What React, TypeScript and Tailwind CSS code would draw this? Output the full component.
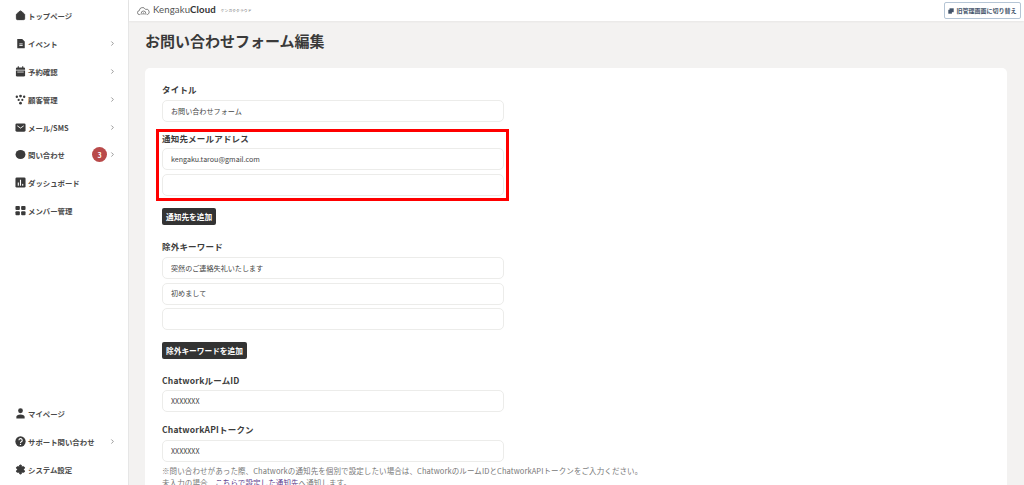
import React from 'react';
import { ChevronRight, House, Settings } from 'lucide-react';

const FONT = "font-['Noto_Sans_CJK_JP','Noto_Sans',sans-serif]";

const FileIcon = () => (
  <svg viewBox="0 0 12 12" className="w-[10px] h-[11px]" fill="#3a3a3a">
    <path d="M1.5 0.5h5.9L10.5 3.5V11a.6.6 0 0 1-.6.6H2.1a.6.6 0 0 1-.6-.6z" />
    <rect x="4" y="6" width="4" height="1" fill="#fff" />
    <rect x="4" y="8" width="4" height="1" fill="#fff" />
  </svg>
);

const CalIcon = () => (
  <svg viewBox="0 0 12 12" className="w-[11px] h-[11px]" fill="#3a3a3a">
    <rect x="3" y="0.3" width="1.2" height="2" />
    <rect x="7.8" y="0.3" width="1.2" height="2" />
    <path d="M1 3a1.4 1.4 0 0 1 1.4-1.4h7.2A1.4 1.4 0 0 1 11 3v1H1z" />
    <path d="M1 5h10v5a1.4 1.4 0 0 1-1.4 1.4H2.4A1.4 1.4 0 0 1 1 10z" />
    <rect x="2.5" y="6.2" width="7" height="0.8" fill="#fff" />
  </svg>
);

const PeopleIcon = () => (
  <svg viewBox="0 0 12 12" className="w-[11px] h-[11px]" fill="#3a3a3a">
    <circle cx="2" cy="3" r="1.3" />
    <circle cx="6" cy="2.2" r="1.5" />
    <circle cx="10" cy="3" r="1.3" />
    <circle cx="4" cy="6.5" r="1.2" />
    <circle cx="8" cy="6.5" r="1.2" />
    <circle cx="6" cy="10" r="1.5" />
  </svg>
);

const MailIcon = () => (
  <svg viewBox="0 0 12 12" className="w-[11px] h-[11px]">
    <rect x="0.5" y="1.5" width="11" height="9" rx="1.5" fill="#3a3a3a" />
    <path d="M2.5 4.2L6 6.6l3.5-2.4" stroke="#fff" strokeWidth="1" fill="none" />
  </svg>
);

const ChatIcon = () => (
  <svg viewBox="0 0 12 12" className="w-[11px] h-[11px]" fill="#3a3a3a">
    <ellipse cx="6" cy="6" rx="5.4" ry="5" />
  </svg>
);

const ChartIcon = () => (
  <svg viewBox="0 0 12 12" className="w-[11px] h-[11px]">
    <rect x="0.5" y="0.5" width="11" height="11" rx="1.5" fill="#3a3a3a" />
    <rect x="3" y="6" width="1.2" height="3.5" fill="#fff" />
    <rect x="5.4" y="3" width="1.2" height="6.5" fill="#fff" />
    <rect x="7.8" y="7.5" width="1.2" height="2" fill="#fff" />
  </svg>
);

const GridIcon = () => (
  <svg viewBox="0 0 12 12" className="w-[11px] h-[11px]" fill="#3a3a3a">
    <rect x="0.5" y="1" width="4.8" height="4.4" rx="1" />
    <rect x="6.7" y="1" width="4.8" height="4.4" rx="1" />
    <rect x="0.5" y="6.8" width="4.8" height="4.4" rx="1" />
    <rect x="6.7" y="6.8" width="4.8" height="4.4" rx="1" />
  </svg>
);

const PersonIcon = () => (
  <svg viewBox="0 0 12 12" className="w-[11px] h-[11px]" fill="#3a3a3a">
    <circle cx="6" cy="3" r="2.6" />
    <path d="M1.5 11.5V9.6c0-1.5 1.6-2.6 4.5-2.6s4.5 1.1 4.5 2.6v1.9z" />
  </svg>
);

const HelpIcon = () => (
  <svg viewBox="0 0 12 12" className="w-[11px] h-[11px]">
    <circle cx="6" cy="6" r="5.6" fill="#3a3a3a" />
    <path d="M4.3 4.7a1.8 1.8 0 1 1 2.6 1.6c-.6.3-.9.6-.9 1.2" stroke="#fff" strokeWidth="1.2" fill="none" />
    <circle cx="6" cy="9.2" r=".75" fill="#fff" />
  </svg>
);

const NavItem = ({
  icon,
  label,
  arrow,
  badge,
}: {
  icon: React.ReactNode;
  label: string;
  arrow?: boolean;
  badge?: string;
}) => (
  <div className="h-[27.8px] flex items-center pl-[15px] pr-[12px]">
    <span className="w-[11px] flex justify-center shrink-0">{icon}</span>
    <span className="ml-[2px] text-[7.4px] font-bold text-[#4a4a4a]">{label}</span>
    {badge && (
      <span className="ml-auto w-[15px] h-[15px] rounded-full bg-[#b94a4a] text-white text-[7px] font-bold flex items-center justify-center">
        {badge}
      </span>
    )}
    {arrow && (
      <ChevronRight
        className={`w-[7px] h-[7px] text-[#777] ${badge ? 'ml-[2px]' : 'ml-auto'}`}
        strokeWidth={2.5}
      />
    )}
  </div>
);

const Field = ({ value, className = '' }: { value?: string; className?: string }) => (
  <div
    className={`w-[342px] h-[22px] bg-white border border-[#ececea] rounded-[5px] pl-[8px] flex items-center text-[7.1px] text-[#444] ${className}`}
  >
    {value}
  </div>
);

const Label = ({ children, className = '' }: { children: React.ReactNode; className?: string }) => (
  <div className={`text-[8.5px] leading-[12px] font-bold text-[#3c3c3c] tracking-[0.2px] ${className}`}>{children}</div>
);

const DarkButton = ({ children, className = '' }: { children: React.ReactNode; className?: string }) => (
  <div
    className={`h-[17px] w-fit px-[4px] bg-[#333] rounded-[2px] text-white text-[7.7px] font-bold flex items-center ${className}`}
  >
    {children}
  </div>
);

export default function App() {
  return (
    <div className={`${FONT} w-[1024px] h-[485px] overflow-hidden flex bg-[#f3f2f1]`}>
      {/* Sidebar */}
      <aside className="w-[129px] h-full shrink-0 bg-white border-r border-[#e6e6e6] flex flex-col justify-between pt-[2px] pb-[2px]">
        <nav>
          <NavItem icon={<House className="w-[11px] h-[11px] text-[#3a3a3a] fill-[#3a3a3a]" />} label="トップページ" />
          <NavItem icon={<FileIcon />} label="イベント" arrow />
          <NavItem icon={<CalIcon />} label="予約確認" arrow />
          <NavItem icon={<PeopleIcon />} label="顧客管理" arrow />
          <NavItem icon={<MailIcon />} label="メール/SMS" arrow />
          <NavItem icon={<ChatIcon />} label="問い合わせ" arrow badge="3" />
          <NavItem icon={<ChartIcon />} label="ダッシュボード" />
          <NavItem icon={<GridIcon />} label="メンバー管理" />
        </nav>
        <nav>
          <NavItem icon={<PersonIcon />} label="マイページ" />
          <NavItem icon={<HelpIcon />} label="サポート問い合わせ" arrow />
          <NavItem
            icon={<Settings className="w-[11px] h-[11px] text-[#3a3a3a] fill-[#3a3a3a]" />}
            label="システム設定"
          />
        </nav>
      </aside>

      <div className="flex-1 min-w-0 flex flex-col">
        {/* Top bar */}
        <header className="h-[21px] shrink-0 bg-white shadow-[0_1px_2px_rgba(0,0,0,0.05)] flex items-center pl-[8px] pr-[3px]">
          <svg viewBox="0 0 20 14" className="w-[13px] h-[10px]" fill="none" stroke="#555" strokeWidth="1.1">
            <path d="M5 12.5H4a3 3 0 0 1-.5-6 5 5 0 0 1 9.5-2 4 4 0 0 1 3 8h-1" />
            <path d="M6.5 12.5v-2a3.5 3.5 0 0 1 7 0v2M9 12.5v-1.5a1 1 0 0 1 2 0v1.5" />
          </svg>
          <span className="ml-[3px] text-[9.6px] text-[#555] font-['Lato',sans-serif] tracking-[0.1px]">
            Kengaku<span className="font-bold text-[#333]">Cloud</span>
          </span>
          <span className="ml-[5px] text-[3.8px] text-[#666] tracking-[0.1px]">ケンガククラウド</span>
          <div className="ml-auto h-[17px] w-[77px] bg-white border border-[#b5c5d5] rounded-[2px] flex items-center justify-center gap-[2px] text-[6px] text-[#44546a] font-bold">
            <svg viewBox="0 0 10 10" className="w-[6px] h-[6px]" fill="#44546a">
              <rect x="2.5" y="0.5" width="7" height="6.5" />
              <rect x="0.5" y="3" width="6" height="6.5" />
            </svg>
            旧管理画面に切り替え
          </div>
        </header>

        <main className="pl-[16px] pr-[17px]">
          <h1 className="mt-[10px] text-[15px] leading-[20px] font-bold text-[#3a3a3a]">お問い合わせフォーム編集</h1>

          <section className="relative mt-[17px] bg-white rounded-[5px] pl-[17px] pt-[15px] h-[430px]">
            <Label className="h-[17px]">タイトル</Label>
            <Field value="お問い合わせフォーム" />

            <Label className="mt-[10px] h-[16px]">通知先メールアドレス</Label>
            <Field value="kengaku.tarou@gmail.com" />
            <Field className="mt-[4px]" />
            <DarkButton className="mt-[12px]">通知先を追加</DarkButton>

            <Label className="mt-[15px] h-[17px]">除外キーワード</Label>
            <Field value="突然のご連絡失礼いたします" />
            <Field className="mt-[3.5px]" value="初めまして" />
            <Field className="mt-[3.5px]" />
            <DarkButton className="mt-[12px]">除外キーワードを追加</DarkButton>

            <Label className="mt-[15px] h-[16px]">ChatworkルームID</Label>
            <Field value="XXXXXXX" />
            <Label className="mt-[11px] h-[17px]">ChatworkAPIトークン</Label>
            <Field value="XXXXXXX" />
            <p className="mt-[3px] text-[7.5px] leading-[12px] text-[#777] tracking-[0.1px] whitespace-nowrap">
              ※問い合わせがあった際、Chatworkの通知先を個別で設定したい場合は、ChatworkのルームIDとChatworkAPIトークンをご入力ください。
              <br />
              未入力の場合、<span className="text-[#5b3a8c]">こちらで設定した通知先</span>へ通知します。
            </p>

            {/* red annotation over the mail field */}
            <div className="absolute left-[11px] top-[61px] w-[353px] h-[72px] border-[3px] border-[#f00] pointer-events-none" />
          </section>
        </main>
      </div>
    </div>
  );
}
